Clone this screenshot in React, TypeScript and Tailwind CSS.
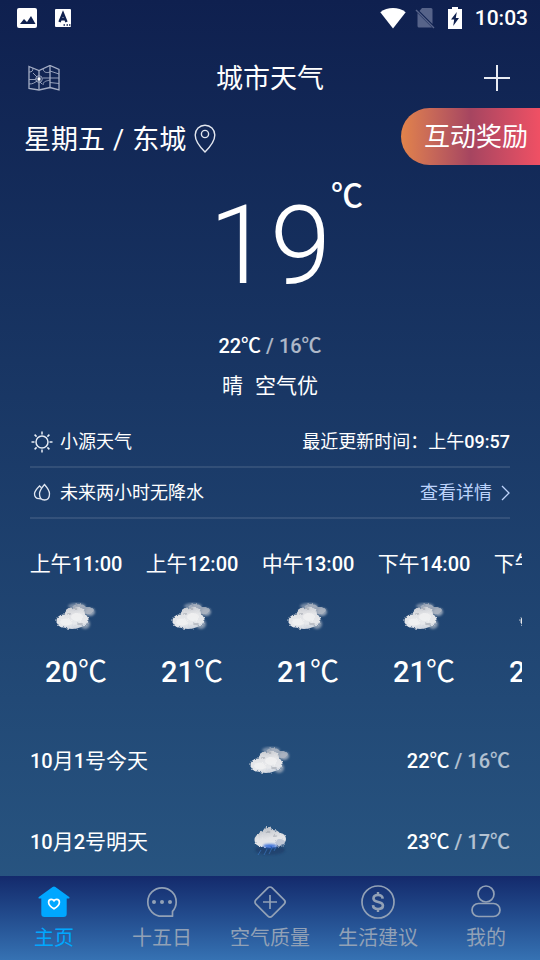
import clsx from 'clsx'

type Sky = 'cloudy' | 'rain'

const hours: { time: string; temp: number; sky: Sky }[] = [
  { time: '上午11:00', temp: 20, sky: 'cloudy' },
  { time: '上午12:00', temp: 21, sky: 'cloudy' },
  { time: '中午13:00', temp: 21, sky: 'cloudy' },
  { time: '下午14:00', temp: 21, sky: 'cloudy' },
  { time: '下午15:00', temp: 21, sky: 'cloudy' },
]

const days: { label: string; high: number; low: number; sky: Sky }[] = [
  { label: '10月1号今天', high: 22, low: 16, sky: 'cloudy' },
  { label: '10月2号明天', high: 23, low: 17, sky: 'rain' },
]

const tabs = [
  { label: '主页', Icon: HomeIcon, active: true },
  { label: '十五日', Icon: ChatIcon },
  { label: '空气质量', Icon: AirIcon },
  { label: '生活建议', Icon: TipsIcon },
  { label: '我的', Icon: UserIcon },
]

// Shared gradients and filters for the weather drawings
function WeatherDefs() {
  return (
    <svg width="0" height="0" className="absolute" aria-hidden="true">
      <defs>
        <linearGradient id="puff" gradientUnits="userSpaceOnUse" x1="18" y1="2" x2="22" y2="28">
          <stop offset="0" stopColor="#bfc3ca" />
          <stop offset="0.4" stopColor="#e3e4e7" />
          <stop offset="0.75" stopColor="#e6e8eb" />
          <stop offset="1" stopColor="#c3cbd8" />
        </linearGradient>
        <filter id="ragged" x="-20%" y="-20%" width="140%" height="140%">
          <feTurbulence type="fractalNoise" baseFrequency="0.4" numOctaves="2" seed="7" />
          <feDisplacementMap in="SourceGraphic" scale="3" xChannelSelector="R" yChannelSelector="G" />
          <feGaussianBlur stdDeviation="0.5" />
        </filter>
        <filter id="mist" x="-40%" y="-40%" width="180%" height="180%">
          <feGaussianBlur stdDeviation="1.2" />
        </filter>
      </defs>
    </svg>
  )
}

function CloudyIcon() {
  return (
    <svg width="42" height="30" viewBox="0 0 42 30" aria-hidden="true">
      <g filter="url(#mist)" fill="#aeb8c6">
        <ellipse cx="30" cy="22" rx="5" ry="5" opacity="0.7" />
        <ellipse cx="22" cy="4" rx="9" ry="3" opacity="0.6" />
        <ellipse cx="35" cy="10" rx="5" ry="4" opacity="0.8" />
      </g>
      <path
        d="M17 5c3-4 11-4 14 0 3 0 7 0 8 3-1 3-4 5-8 4l-9-2z"
        fill="#b0b7c3"
        opacity="0.8"
        filter="url(#ragged)"
      />
      <g filter="url(#ragged)">
        <g fill="url(#puff)">
          <circle cx="8" cy="19" r="6.500" />
          <circle cx="16" cy="12" r="6.500" />
          <circle cx="23" cy="12" r="7" />
          <circle cx="27" cy="18" r="6.500" />
          <ellipse cx="17" cy="20" rx="13" ry="7" />
        </g>
        <g fill="#8f959f" opacity="0.450">
          <ellipse cx="20" cy="7" rx="2.500" ry="1.200" />
          <ellipse cx="14" cy="12" rx="2" ry="1" />
          <ellipse cx="25" cy="22" rx="3" ry="1.200" />
        </g>
        <ellipse cx="11" cy="20" rx="6" ry="3.500" fill="#f3f3f4" opacity="0.7" />
        <ellipse cx="22" cy="15" rx="6" ry="4" fill="#f3f3f4" opacity="0.7" />
      </g>
    </svg>
  )
}

function RainIcon() {
  return (
    <svg width="42" height="32" viewBox="0 0 42 32" aria-hidden="true">
      <ellipse cx="21" cy="24" rx="15" ry="5" fill="#1b3560" opacity="0.5" filter="url(#mist)" />
      <g filter="url(#ragged)">
        <g fill="url(#puff)">
          <circle cx="12" cy="14" r="6.500" />
          <circle cx="19" cy="6" r="5" />
          <circle cx="16" cy="11" r="7" />
          <circle cx="25" cy="11" r="7" />
          <circle cx="31" cy="13" r="6" />
          <ellipse cx="21" cy="15.500" rx="14" ry="6" />
        </g>
        <g fill="#8f959f" opacity="0.450">
          <ellipse cx="19" cy="6" rx="2.500" ry="1.200" />
          <ellipse cx="26" cy="10" rx="2" ry="1" />
        </g>
        <ellipse cx="31" cy="17" rx="5" ry="4" fill="#a5b3c8" opacity="0.6" />
      </g>
      <ellipse cx="21" cy="20" rx="7" ry="2" fill="#2d67d8" opacity="0.9" filter="url(#mist)" />
      <path d="M12 24l-3 5M18 23l-3 6M23 22l-3 6M27 21l-2 4" stroke="#3f7fd0" strokeWidth="0.800" opacity="0.7" />
    </svg>
  )
}

function WeatherIcon({ sky }: { sky: Sky }) {
  return sky === 'rain' ? <RainIcon /> : <CloudyIcon />
}

function HomeIcon() {
  return (
    <svg width="36" height="36" viewBox="0 0 36 36" aria-hidden="true">
      <path
        d="M16.600 3a2.400 2.400 0 0 1 2.800 0l13.800 10c.7.6.3 1.600-.5 1.600h-2v15.200A3.200 3.200 0 0 1 27.500 33h-19a3.200 3.200 0 0 1-3.200-3.200V14.600h-2c-.8 0-1.200-1-.5-1.600z"
        fill="#00a7ff"
      />
      <path
        d="M18 24.800c-3.200-1.900-5.400-4-5.400-6.600 0-1.800 1.300-2.900 2.800-2.900 1.100 0 2 .5 2.600 1.400.6-.9 1.500-1.400 2.600-1.400 1.500 0 2.800 1.100 2.800 2.900 0 2.600-2.200 4.700-5.400 6.600z"
        fill="none"
        stroke="#fff"
        strokeWidth="1.700"
      />
    </svg>
  )
}

function ChatIcon() {
  return (
    <svg width="36" height="36" viewBox="0 0 36 36" fill="none" stroke="currentColor" strokeWidth="1.700" aria-hidden="true">
      <path d="M18 32.200A14.200 14.200 0 1 1 32.200 18c0 3.800-1.400 6.900-3.700 9.400v4.800z" strokeLinejoin="round" />
      <g fill="currentColor" stroke="none">
        <circle cx="10" cy="18" r="2" />
        <circle cx="18" cy="18" r="2" />
        <circle cx="26" cy="18" r="2" />
      </g>
    </svg>
  )
}

function AirIcon() {
  return (
    <svg width="36" height="36" viewBox="0 0 36 36" fill="none" stroke="currentColor" strokeWidth="1.700" aria-hidden="true">
      <rect x="6.500" y="6.500" width="23" height="23" rx="3" transform="rotate(45 18 18)" />
      <path d="M18 11v14M11 18h14" />
    </svg>
  )
}

function TipsIcon() {
  return (
    <svg width="36" height="36" viewBox="0 0 36 36" fill="none" stroke="currentColor" aria-hidden="true">
      <circle cx="18" cy="18" r="16" strokeWidth="1.700" />
      <path d="M18 8v3M18 25v3" strokeWidth="2.400" />
      <path
        d="M22.700 14.600c-.3-2.300-2-3.600-4.600-3.600-2.700 0-4.600 1.300-4.600 3.500 0 4.800 9.400 2.300 9.400 7 0 2.300-2.100 3.500-4.900 3.500s-4.800-1.300-5-3.900"
        strokeWidth="2.700"
      />
    </svg>
  )
}

function UserIcon() {
  return (
    <svg width="36" height="36" viewBox="0 0 36 36" fill="none" stroke="currentColor" strokeWidth="1.700" aria-hidden="true">
      <circle cx="18" cy="10" r="8" />
      <rect x="4" y="19.500" width="28" height="13" rx="6.500" />
    </svg>
  )
}

function MapIcon() {
  return (
    <svg width="32" height="26" viewBox="0 0 32 26" fill="none" stroke="#a5aec5" strokeWidth="0.900" aria-hidden="true">
      <path d="M1 1.500l10 4 11-5 9 4v20.500l-9-2.500-11 2.500L1 23.500z" strokeWidth="1.300" />
      <path d="M11 5.500v19M22 .500v22" strokeWidth="1.300" />
      <path d="M1 14.500h6l2-1M5 3c0 3-1 4-4 4M5 8l4 4M1 19c4 0 5-1 8-3M14.500 13H31M22 6l9 3M22 17.500l9 1M15 4c1 4 4 4 7 3M15 20c0-4 4-4 7-5M12 17l2 2" />
      <circle cx="11" cy="14" r="3.300" />
      <rect x="9.500" y="12.500" width="3" height="3" fill="#fff" stroke="none" />
    </svg>
  )
}

function PinIcon() {
  return (
    <svg width="22" height="30" viewBox="0 0 22 30" fill="none" stroke="#e3e7ef" strokeWidth="1.400" aria-hidden="true">
      <path d="M11 28C7 24 1.200 17 1.200 11a9.800 9.800 0 0 1 19.600 0c0 6-5.800 13-9.800 17z" />
      <circle cx="11" cy="10" r="3.600" />
    </svg>
  )
}

function StatusBar() {
  return (
    <div className="flex h-9 items-center justify-between pr-3 pl-4">
      <div className="flex items-center gap-4">
        <svg width="22" height="22" viewBox="0 0 22 22" aria-hidden="true">
          <rect x="1" y="1" width="20" height="20" rx="2" fill="#fff" />
          <path d="M4 17l4-5 3 3 4-6 4.500 8z" fill="#10214f" />
        </svg>
        <svg width="18" height="20" viewBox="0 0 18 20" aria-hidden="true">
          <rect x="1" y="1" width="16" height="18" rx="1" fill="#fff" />
          <path d="M5.500 14L9 5.500l3.500 8.500M6.500 11.200h5" stroke="#10214f" strokeWidth="2.400" fill="none" />
          <path d="M9.500 17H11M12.500 17H14M15 17h1.500" stroke="#10214f" strokeWidth="1.500" />
        </svg>
      </div>
      <div className="flex items-center gap-[9px]">
        <svg width="26" height="22" viewBox="0 0 26 22" aria-hidden="true">
          <path d="M13 21.500L.300 5.300C4 2.300 8.300 1 13 1s9 1.300 12.700 4.300z" fill="#fff" />
        </svg>
        <svg width="20" height="22" viewBox="0 0 20 22" aria-hidden="true">
          <path d="M7 1h9a1.500 1.500 0 0 1 1.500 1.500V17L4.500 4zM2.500 6L17 20.500H4A1.500 1.500 0 0 1 2.500 19z" fill="#566389" />
          <path d="M1 3l18 18" stroke="#566389" strokeWidth="1.500" />
        </svg>
        <svg width="22" height="22" viewBox="0 0 22 22" aria-hidden="true">
          <path d="M8 0h6v2h4v20H4V2h4z" fill="#fff" />
          <path d="M12.800 5L7 12.500h3.200L9.200 19l5.800-8h-3.200z" fill="#10214f" />
        </svg>
        <span className="text-[21px] leading-6 font-medium">10:03</span>
      </div>
    </div>
  )
}

// Digits are set a step smaller and heavier than the characters round them
function MixedText({ children }: { children: string }) {
  return (
    <span className="text-[21px] leading-8">
      {children.split(/([\d:]+)/).map((part, i) =>
        i % 2 ? (
          <span key={i} className="text-xl leading-8 font-medium">
            {part}
          </span>
        ) : (
          part
        )
      )}
    </span>
  )
}

function TempRange({ high, low }: { high: number; low: number }) {
  return (
    <p className="text-xl leading-7 font-medium">
      {high}℃ <span className="text-white/65">/ {low}℃</span>
    </p>
  )
}

export default function App() {
  return (
    <div className="flex h-screen flex-col overflow-hidden bg-linear-to-b from-[#0f204f] to-[#2a5985] font-[Roboto,'Noto_Sans_CJK_SC',sans-serif] text-white">
      <WeatherDefs />
      <StatusBar />

      <main className="min-h-0 flex-1 overflow-y-auto [scrollbar-width:none]">
        {/* Title bar */}
        <header className="flex h-[72px] items-center justify-between px-7 pt-3">
          <button aria-label="地图">
            <MapIcon />
          </button>
          <h1 className="pt-0.5 text-[27px] leading-9">城市天气</h1>
          <button aria-label="添加城市">
            <svg width="32" height="28" viewBox="0 0 32 28" stroke="#e8ebf2" strokeWidth="2" aria-hidden="true">
              <path d="M17 1v26M4 14h26" />
            </svg>
          </button>
        </header>

        {/* Location and reward */}
        <div className="flex h-[57px] items-center justify-between pl-6">
          <button className="flex items-center gap-2 pt-1 text-[27px] leading-9">
            <span className="pt-0.5">星期五</span>
            <span className="pt-0.5">/</span>
            <span className="pt-0.5">东城</span>
            <PinIcon />
          </button>
          <button className="h-full rounded-l-full bg-linear-to-r from-[#e2834a] via-[#a64560] to-[#f05064] pr-3 pl-[23px] text-[26px] leading-9">
            互动奖励
          </button>
        </div>

        {/* Current conditions */}
        <section className="flex flex-col items-center">
          <div className="relative mt-[13px] text-[110px] leading-[136px] font-light">
            19
            <span className="absolute top-0 left-full text-[32px] leading-9 font-medium">℃</span>
          </div>
          <div className="mt-[18px]">
            <TempRange high={22} low={16} />
          </div>
          <p className="mt-3 flex gap-3 text-[21px] leading-7">
            <span>晴</span>
            <span>空气优</span>
          </p>
        </section>

        {/* Update info */}
        <section className="mx-[30px] mt-[17px] text-lg leading-6">
          <div className="flex h-[51px] items-center border-b-2 border-white/10">
            <svg width="24" height="24" viewBox="0 0 24 24" fill="none" stroke="#e8edf5" strokeWidth="1.500" aria-hidden="true">
              <circle cx="12" cy="12" r="6" />
              <path d="M12 1.500v3M12 19.500v3M1.500 12h3M19.500 12h3M4.600 4.600l2 2M17.400 17.400l2 2M4.600 19.400l2-2M17.400 6.600l2-2" />
            </svg>
            <span className="ml-[6px]">小源天气</span>
            <span className="ml-auto">
              最近更新时间：上午<span className="font-medium">09:57</span>
            </span>
          </div>
          <div className="flex h-[51px] items-center border-b-2 border-white/10">
            <svg width="24" height="24" viewBox="0 0 24 24" fill="none" stroke="#dfe6f1" strokeWidth="1.300" aria-hidden="true">
              <path d="M14.500 3.500c3 3.500 5 6.500 5 9.200 0 3.800-2 6.300-5 6.300s-5-2.500-5-6.300c0-2.700 2-5.700 5-9.200z" />
              <path d="M11.500 6.700L9.500 5C6.500 8 4.500 10.200 4.500 12.700c0 3 1.800 4.800 4.500 4.900l2 .2" />
            </svg>
            <span className="ml-[6px]">未来两小时无降水</span>
            <a href="#rain" className="ml-auto flex items-center text-[#bdd3fb]">
              查看详情
              <svg width="18" height="18" viewBox="0 0 18 18" fill="none" stroke="currentColor" strokeWidth="1.300" aria-hidden="true">
                <path d="M10 2l7 7-7 7" />
              </svg>
            </a>
          </div>
        </section>

        {/* Hourly forecast */}
        <section className="mx-[18px] mt-[29px] flex overflow-hidden">
          {hours.map((h) => (
            <div key={h.time} className="flex w-[116px] shrink-0 flex-col items-center whitespace-nowrap">
              <MixedText>{h.time}</MixedText>
              <span className="flex h-[74px] items-center">
                <WeatherIcon sky={h.sky} />
              </span>
              <span className="text-[29px] leading-9">
                <span className="font-medium">{h.temp}</span>℃
              </span>
            </div>
          ))}
        </section>

        {/* Daily forecast */}
        <ul className="mx-[30px] mt-[30px]">
          {days.map((d) => (
            <li key={d.label} className="grid h-[81px] grid-cols-[1fr_auto_1fr] items-center">
              <MixedText>{d.label}</MixedText>
              <WeatherIcon sky={d.sky} />
              <div className="justify-self-end">
                <TempRange high={d.high} low={d.low} />
              </div>
            </li>
          ))}
        </ul>
      </main>

      <nav className="grid h-[84px] shrink-0 grid-cols-5 bg-linear-to-b from-[#142a6c] to-[#3672b3]">
        {tabs.map(({ label, Icon, active }) => (
          <button
            key={label}
            className={clsx(
              'flex flex-col items-center pt-2 text-xl leading-9',
              active ? 'text-[#00a7ff]' : 'text-[#92a1b6]'
            )}
          >
            <Icon />
            <span>{label}</span>
          </button>
        ))}
      </nav>
    </div>
  )
}
